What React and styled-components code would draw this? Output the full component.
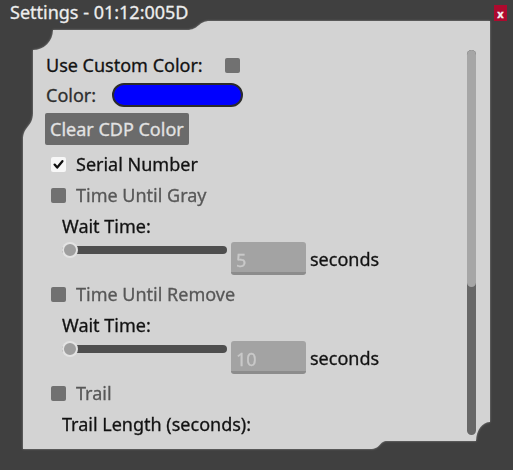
import React from 'react';
import styled, { createGlobalStyle } from 'styled-components';

const GlobalStyle = createGlobalStyle`
  html, body {
    margin: 0;
    padding: 0;
    background: #404040;
  }
  body {
    font-family: "Noto Sans", "Open Sans", sans-serif;
    -webkit-text-stroke: 0.3px currentColor;
  }
`;

// outline of the inner sheet (tab on top, notched corners)
const SHEET_PATH =
  "path('M 187 0 L 467 0 L 467 401 A 14 19 0 0 0 453 420 L 364 420 C 356 420 358 428 347 428 L 0 428 L 0 119 C 0 105 10 106 10 92 L 10 29 A 20 20 0 0 0 30 9 L 164 9 C 176 9 175 0 187 0 Z')";

const App = () => {
  return (
    <>
      <GlobalStyle />
      <Window>
        <TitleBar>
          <Title>Settings - 01:12:005D</Title>
          <CloseButton type="button">x</CloseButton>
        </TitleBar>
        <SheetFrame>
          <Sheet>
            <Content>
              <Row $gap={22}>
                <Label>Use Custom Color:</Label>
                <Checkbox />
              </Row>
              <Row $gap={16}>
                <Label $tone="#2e2e2e">Color:</Label>
                <Swatch $color="#0000ff" />
              </Row>
              <ClearButton type="button">Clear CDP Color</ClearButton>

              <CheckRow>
                <Checkbox $checked>
                  <svg width="15" height="15" viewBox="0 0 15 15">
                    <path d="M3.6 7.6 L6.2 10.6 L11.4 4.2" fill="none" stroke="#111" strokeWidth="2.3" strokeLinecap="round" strokeLinejoin="round" />
                  </svg>
                </Checkbox>
                <Label>Serial Number</Label>
              </CheckRow>

              <CheckRow>
                <Checkbox />
                <Label $tone="#575757">Time Until Gray</Label>
              </CheckRow>
              <SubLabel>Wait Time:</SubLabel>
              <SliderRow>
                <Slider>
                  <Thumb />
                </Slider>
                <Field>5</Field>
                <Unit>seconds</Unit>
              </SliderRow>

              <CheckRow>
                <Checkbox />
                <Label $tone="#575757">Time Until Remove</Label>
              </CheckRow>
              <SubLabel>Wait Time:</SubLabel>
              <SliderRow>
                <Slider>
                  <Thumb />
                </Slider>
                <Field>10</Field>
                <Unit>seconds</Unit>
              </SliderRow>

              <CheckRow>
                <Checkbox />
                <Label $tone="#575757">Trail</Label>
              </CheckRow>
              <SubLabel>Trail Length (seconds):</SubLabel>
            </Content>
            <ScrollTrack>
              <ScrollThumb />
            </ScrollTrack>
          </Sheet>
        </SheetFrame>
      </Window>
    </>
  );
};

const Window = styled.div`
  display: flex;
  flex-direction: column;
  width: 513px;
  height: 470px;
  background: #404040;
  overflow: hidden;
`;

const TitleBar = styled.div`
  display: flex;
  align-items: flex-start;
  justify-content: space-between;
  height: 21px;
  padding: 0 6px 0 10px;
`;

const Title = styled.div`
  font-size: 18px;
  line-height: 24px;
  color: #ededed;
  white-space: nowrap;
`;

const CloseButton = styled.button`
  width: 13px;
  height: 16px;
  margin-top: 5px;
  padding: 0;
  border: none;
  background: #ad0a2e;
  color: #f4f4f4;
  font-family: "Noto Sans", sans-serif;
  font-size: 11px;
  font-weight: 700;
  line-height: 15px;
  cursor: pointer;
`;

const SheetFrame = styled.div`
  padding: 0 23px;
  filter: drop-shadow(0 0 1px #8a8a8a);
`;

const Sheet = styled.div`
  display: flex;
  height: 428px;
  background: #d3d3d3;
  clip-path: ${SHEET_PATH};
`;

const Content = styled.div`
  flex: 1;
  display: flex;
  flex-direction: column;
  gap: 6px;
  padding: 32px 0 0 23px;
`;

const Row = styled.div`
  display: flex;
  align-items: center;
  gap: ${(p) => p.$gap}px;
  height: 24px;
`;

const Label = styled.span`
  font-size: 18px;
  line-height: 24px;
  color: ${(p) => p.$tone || '#121212'};
  white-space: nowrap;
`;

const Checkbox = styled.span`
  display: flex;
  align-items: center;
  justify-content: center;
  width: 15px;
  height: 15px;
  border-radius: 2px;
  background: ${(p) => (p.$checked ? '#f7f7f7' : '#717171')};
  flex-shrink: 0;
`;

const Swatch = styled.span`
  box-sizing: border-box;
  width: 131px;
  height: 24px;
  border: 2px solid #2b2b2b;
  border-radius: 12px;
  background: ${(p) => p.$color};
`;

const ClearButton = styled.button`
  align-self: flex-start;
  height: 32px;
  margin-left: -1px;
  padding: 0 5px;
  border: none;
  border-radius: 2px;
  background: #6b6b6b;
  color: #e2e2e2;
  font-family: inherit;
  font-size: 18px;
  line-height: 32px;
`;

const CheckRow = styled.div`
  display: flex;
  align-items: center;
  gap: 10px;
  height: 24px;
  padding-left: 5px;
  margin-top: 1px;
`;

const SubLabel = styled.div`
  padding-left: 16px;
  margin-top: 1px;
  font-size: 18px;
  line-height: 24px;
  color: #121212;
`;

const SliderRow = styled.div`
  display: flex;
  align-items: flex-start;
  gap: 4px;
  padding-left: 16px;
  margin-top: -2px;
`;

const Slider = styled.div`
  position: relative;
  width: 165px;
  height: 8px;
  margin-top: 4px;
  border-radius: 4px;
  background: #4e4e4e;
`;

const Thumb = styled.span`
  position: absolute;
  left: 0;
  top: -4px;
  box-sizing: border-box;
  width: 16px;
  height: 16px;
  border-radius: 50%;
  border: 2px solid rgba(238, 238, 238, 0.85);
  background: #9e9e9e;
`;

const Field = styled.div`
  box-sizing: border-box;
  width: 75px;
  height: 33px;
  padding: 6px 0 0 5px;
  border-bottom: 3px solid #8c8c8c;
  border-radius: 3px;
  background: #a3a3a3;
  color: #c9c9c9;
  font-size: 18px;
  line-height: 24px;
`;

const Unit = styled.span`
  margin-top: 5px;
  font-size: 18px;
  line-height: 24px;
  color: #121212;
`;

const ScrollTrack = styled.div`
  width: 9px;
  height: 385px;
  margin: 29px 14px 0 0;
  border-radius: 5px;
  background: #676767;
  overflow: hidden;
`;

const ScrollThumb = styled.div`
  height: 237px;
  border-radius: 5px;
  background: #a6a6a6;
`;

export default App;
